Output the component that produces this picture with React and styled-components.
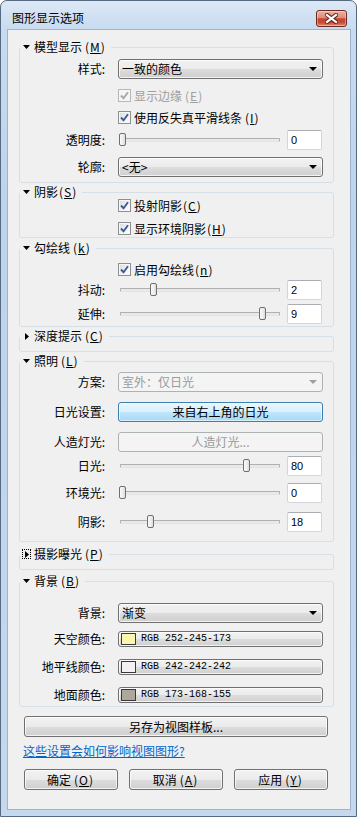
import React from "react";
import styled, { createGlobalStyle, css } from "styled-components";

const GlobalStyle = createGlobalStyle`
  * { box-sizing: border-box; }
  html, body { margin: 0; padding: 0; background: #ffffff; }
  body {
    font-family: "Noto Sans CJK SC", "Noto Sans", sans-serif;
    font-size: 12px;
    line-height: 14px;
    color: #000;
  }
`;

const Window = styled.div`
  width: 357px;
  height: 817px;
  display: flex;
  flex-direction: column;
  border: 1px solid #566a82;
  border-radius: 7px 7px 0 0;
  background: linear-gradient(180deg, #dce8f6 0px, #c8dbf0 28px, #bed4eb 200px, #c4d8ee 100%);
  padding: 0 5px 6px 6px;
`;

const TitleBar = styled.div`
  height: 28px;
  flex: none;
  display: flex;
  align-items: center;
  justify-content: space-between;
  padding: 6px 4px 0 5px;
`;

const Title = styled.span`
  font-size: 12px;
  color: #000;
`;

const CloseButton = styled.div`
  width: 31px;
  height: 17px;
  display: flex;
  align-items: center;
  justify-content: center;
  border: 1px solid #6e2a20;
  border-radius: 3px;
  background: linear-gradient(180deg, #eab3a4 0%, #dd8d7a 45%, #c9452c 52%, #c54a32 75%, #e08a72 100%);
  box-shadow: inset 0 0 0 1px rgba(255, 255, 255, 0.35);
`;

const Client = styled.div`
  flex: 1;
  display: flex;
  flex-direction: column;
  align-items: flex-start;
  border: 1px solid #9fb3cb;
  background: #f0f0f0;
  padding: 10px 16px 0 11px;
`;

const Section = styled.fieldset`
  width: 315px;
  margin: ${(p) => p.$mt}px 0 0 0;
  padding: 0 10px ${(p) => p.$pb}px 0;
  border: 1px solid #d5dfe5;
  border-radius: 3px;
  min-width: 0;
`;

const Legend = styled.legend`
  display: flex;
  align-items: center;
  height: 14px;
  padding: 0 4px 0 2px;
  line-height: 14px;
  white-space: nowrap;
`;

const ArrowBox = styled.span`
  width: 9px;
  height: 10px;
  margin-right: 3px;
  display: flex;
  align-items: center;
  justify-content: center;
  ${(p) =>
    p.$focus &&
    css`
      outline: 1px dotted #000;
      outline-offset: -1px;
    `}
`;

const Row = styled.div`
  display: flex;
  align-items: center;
  height: ${(p) => p.$h}px;
  margin-top: ${(p) => p.$mt}px;
`;

const Label = styled.span`
  width: 85px;
  flex: none;
  text-align: right;
  white-space: nowrap;
`;

const Field = styled.div`
  margin-left: 13px;
  flex: 1;
  height: 100%;
  display: flex;
  align-items: center;
`;

const buttonFace = css`
  border: 1px solid #707070;
  border-radius: 3px;
  background: linear-gradient(180deg, #f2f2f2 0%, #ebebeb 50%, #dddddd 51%, #cfcfcf 100%);
  box-shadow: inset 0 0 0 1px rgba(255, 255, 255, 0.75);
`;

const hotFace = css`
  border: 1px solid #3c7fb1;
  border-radius: 3px;
  background: linear-gradient(180deg, #eaf6fd 0%, #d9f0fc 50%, #bee6fd 51%, #a7d9f5 100%);
  box-shadow: inset 0 0 0 1px rgba(255, 255, 255, 0.6);
`;

const offFace = css`
  border: 1px solid #adb2b5;
  border-radius: 3px;
  background: #f4f4f4;
  color: #9a9a9a;
`;

const faces = { normal: buttonFace, hot: hotFace, off: offFace };

const Combo = styled.div`
  width: 100%;
  height: 20px;
  display: flex;
  align-items: center;
  justify-content: space-between;
  padding: 0 5px 0 3px;
  ${(p) => faces[p.$tone || "normal"]}
`;

const DropArrow = styled.span`
  width: 0;
  height: 0;
  border-left: 4px solid transparent;
  border-right: 4px solid transparent;
  border-top: 4px solid ${(p) => (p.$off ? "#a0a0a0" : "#000")};
`;

const Button = styled.div`
  width: ${(p) => (p.$w ? `${p.$w}px` : "100%")};
  height: ${(p) => p.$h || 20}px;
  flex: none;
  display: flex;
  align-items: center;
  justify-content: center;
  white-space: nowrap;
  ${(p) => faces[p.$tone || "normal"]}
`;

const ColorButton = styled.div`
  width: 100%;
  height: 16px;
  display: flex;
  align-items: center;
  padding-left: 2px;
  ${buttonFace}
`;

const Swatch = styled.span`
  width: 15px;
  height: 12px;
  border: 1px solid #3a3a3a;
  background: ${(p) => p.$color};
`;

const RgbText = styled.span`
  margin-left: 5px;
  font-family: "Liberation Mono", monospace;
  font-size: 10px;
  line-height: 12px;
`;

const CheckRow = styled.div`
  display: flex;
  align-items: center;
  color: ${(p) => (p.$off ? "#a0a0a0" : "#000")};
`;

const Box = styled.span`
  width: 13px;
  height: 13px;
  margin-right: 3px;
  display: flex;
  align-items: center;
  justify-content: center;
  border: 1px solid ${(p) => (p.$off ? "#b7b7b7" : "#8e8f8f")};
  background: ${(p) =>
    p.$off ? "#f4f4f4" : "linear-gradient(135deg, #d9d9d9 0%, #f4f4f4 60%, #ffffff 100%)"};
  box-shadow: inset 0 0 0 1px #f6f6f6;
`;

const Slider = styled.div`
  position: relative;
  width: 160px;
  height: 20px;
  margin-left: 2px;
  display: flex;
  align-items: center;
`;

const Track = styled.div`
  width: 100%;
  height: 4px;
  border: 1px solid #b0b0b0;
  border-bottom-color: #e4e4e4;
  border-radius: 1px;
  background: #e7eaea;
`;

const Thumb = styled.div`
  position: absolute;
  top: 3px;
  width: 7px;
  height: 13px;
  border: 1px solid #707070;
  border-radius: 2px;
  background: linear-gradient(90deg, #fafafa 0%, #ececec 60%, #dcdcdc 100%);
`;

const NumBox = styled.div`
  width: 35px;
  height: 20px;
  margin-left: auto;
  margin-right: 1px;
  padding: 3px 0 0 3px;
  background: #fff;
  border: 1px solid #d2d5da;
  border-top-color: #abadb3;
  border-radius: 2px;
  font-family: "Liberation Sans", sans-serif;
  font-size: 11px;
  line-height: 12px;
`;

const KeyWrap = styled.span`
  padding: 0 1px 0 ${(p) => (p.$gap ? 3 : 1)}px;
  letter-spacing: 1px;
`;

const LinkText = styled.a`
  margin: 7px 0 0 4px;
  color: #0066cc;
  text-decoration: underline;
  white-space: nowrap;
`;

const Footer = styled.div`
  display: flex;
  gap: 11px;
  margin: 11px 0 0 5px;
`;

const SaveRow = styled.div`
  margin: 9px 0 0 5px;
`;

const Key = ({ k, gap }) => (
  <KeyWrap $gap={gap}>
    (<u>{k}</u>)
  </KeyWrap>
);

const Tri = ({ open }) =>
  open ? (
    <svg width="7" height="4" viewBox="0 0 7 4">
      <polygon points="0,0 7,0 3.5,4" fill="#000" />
    </svg>
  ) : (
    <svg width="4" height="7" viewBox="0 0 4 7">
      <polygon points="0,0 4,3.5 0,7" fill="#000" />
    </svg>
  );

const Head = ({ open = true, focus, text, k, gap = true }) => (
  <Legend>
    <ArrowBox $focus={focus}>
      <Tri open={open} />
    </ArrowBox>
    {text}
    <Key k={k} gap={gap} />
  </Legend>
);

const Check = ({ off, text, k, gap }) => (
  <CheckRow $off={off}>
    <Box $off={off}>
      <svg width="9" height="9" viewBox="0 0 9 9">
        <polyline
          points="1,4.5 3.5,7.2 8,1.2"
          fill="none"
          stroke={off ? "#a8a8a8" : "#3a5b9a"}
          strokeWidth="1.9"
        />
      </svg>
    </Box>
    {text}
    <Key k={k} gap={gap} />
  </CheckRow>
);

const SliderField = ({ value, frac }) => (
  <Field>
    <Slider>
      <Track />
      <Thumb style={{ left: `${-1 + frac * 155}px` }} />
    </Slider>
    <NumBox>{value}</NumBox>
  </Field>
);

const App = () => {
  return (
    <Window>
      <GlobalStyle />
      <TitleBar>
        <Title>图形显示选项</Title>
        <CloseButton>
          <svg width="13" height="11" viewBox="0 0 13 11">
            <path d="M2 2 L11 9 M11 2 L2 9" stroke="#5a2a22" strokeWidth="4.2" strokeLinecap="square" />
            <path d="M2 2 L11 9 M11 2 L2 9" stroke="#ffffff" strokeWidth="2.2" strokeLinecap="square" />
          </svg>
        </CloseButton>
      </TitleBar>

      <Client>
        {/* 模型显示 */}
        <Section $mt={0} $pb={5}>
          <Head text="模型显示" k="M" />
          <Row $h={20} $mt={5}>
            <Label>样式:</Label>
            <Field>
              <Combo>
                一致的颜色
                <DropArrow />
              </Combo>
            </Field>
          </Row>
          <Row $h={13} $mt={10}>
            <Label />
            <Field>
              <Check off text="显示边缘" k="E" gap />
            </Field>
          </Row>
          <Row $h={13} $mt={9}>
            <Label />
            <Field>
              <Check text="使用反失真平滑线条" k="I" gap />
            </Field>
          </Row>
          <Row $h={20} $mt={6}>
            <Label>透明度:</Label>
            <SliderField value="0" frac={0} />
          </Row>
          <Row $h={20} $mt={7}>
            <Label>轮廓:</Label>
            <Field>
              <Combo>
                &lt;无&gt;
                <DropArrow />
              </Combo>
            </Field>
          </Row>
        </Section>

        {/* 阴影 */}
        <Section $mt={2} $pb={2}>
          <Head text="阴影" k="S" gap={false} />
          <Row $h={13} $mt={0}>
            <Label />
            <Field>
              <Check text="投射阴影" k="C" />
            </Field>
          </Row>
          <Row $h={13} $mt={10}>
            <Label />
            <Field>
              <Check text="显示环境阴影" k="H" />
            </Field>
          </Row>
        </Section>

        {/* 勾绘线 */}
        <Section $mt={3} $pb={2}>
          <Head text="勾绘线" k="k" />
          <Row $h={13} $mt={8}>
            <Label />
            <Field>
              <Check text="启用勾绘线" k="n" />
            </Field>
          </Row>
          <Row $h={20} $mt={4}>
            <Label>抖动:</Label>
            <SliderField value="2" frac={0.2} />
          </Row>
          <Row $h={20} $mt={4}>
            <Label>延伸:</Label>
            <SliderField value="9" frac={0.9} />
          </Row>
        </Section>

        <Section $mt={2} $pb={8}>
          <Head open={false} text="深度提示" k="C" />
        </Section>

        {/* 照明 */}
        <Section $mt={2} $pb={9}>
          <Head text="照明" k="L" />
          <Row $h={20} $mt={4}>
            <Label>方案:</Label>
            <Field>
              <Combo $tone="off">
                室外：仅日光
                <DropArrow $off />
              </Combo>
            </Field>
          </Row>
          <Row $h={20} $mt={10}>
            <Label>日光设置:</Label>
            <Field>
              <Button $tone="hot">来自右上角的日光</Button>
            </Field>
          </Row>
          <Row $h={20} $mt={10}>
            <Label>人造灯光:</Label>
            <Field>
              <Button $tone="off">人造灯光...</Button>
            </Field>
          </Row>
          <Row $h={20} $mt={4}>
            <Label>日光:</Label>
            <SliderField value="80" frac={0.8} />
          </Row>
          <Row $h={20} $mt={7}>
            <Label>环境光:</Label>
            <SliderField value="0" frac={0} />
          </Row>
          <Row $h={20} $mt={9}>
            <Label>阴影:</Label>
            <SliderField value="18" frac={0.18} />
          </Row>
        </Section>

        <Section $mt={5} $pb={8}>
          <Head open={false} focus text="摄影曝光" k="P" />
        </Section>

        {/* 背景 */}
        <Section $mt={4} $pb={3}>
          <Head text="背景" k="B" />
          <Row $h={20} $mt={15}>
            <Label>背景:</Label>
            <Field>
              <Combo>
                渐变
                <DropArrow />
              </Combo>
            </Field>
          </Row>
          <Row $h={16} $mt={8}>
            <Label>天空颜色:</Label>
            <Field>
              <ColorButton>
                <Swatch $color="rgb(252,245,173)" />
                <RgbText>RGB 252-245-173</RgbText>
              </ColorButton>
            </Field>
          </Row>
          <Row $h={16} $mt={12}>
            <Label>地平线颜色:</Label>
            <Field>
              <ColorButton>
                <Swatch $color="rgb(242,242,242)" />
                <RgbText>RGB 242-242-242</RgbText>
              </ColorButton>
            </Field>
          </Row>
          <Row $h={16} $mt={12}>
            <Label>地面颜色:</Label>
            <Field>
              <ColorButton>
                <Swatch $color="rgb(173,168,155)" />
                <RgbText>RGB 173-168-155</RgbText>
              </ColorButton>
            </Field>
          </Row>
        </Section>

        <SaveRow>
          <Button $w={304} $h={21}>
            另存为视图样板...
          </Button>
        </SaveRow>

        <LinkText href="#">这些设置会如何影响视图图形?</LinkText>

        <Footer>
          <Button $w={94} $h={21}>
            确定<Key k="O" gap />
          </Button>
          <Button $w={94} $h={21}>
            取消<Key k="A" gap />
          </Button>
          <Button $w={94} $h={21}>
            应用<Key k="Y" gap />
          </Button>
        </Footer>
      </Client>
    </Window>
  );
};

export default App;
